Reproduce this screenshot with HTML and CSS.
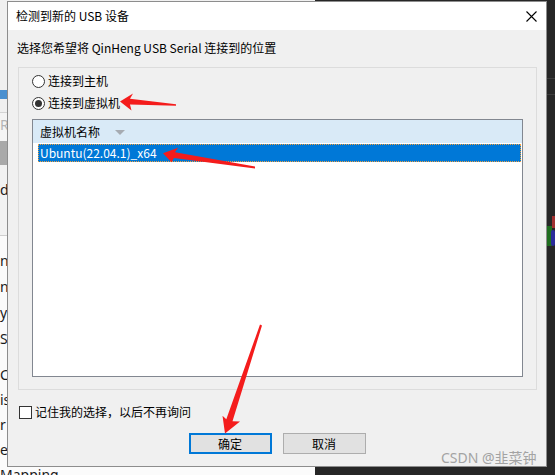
FILE: index.html
```html
<!DOCTYPE html>
<html lang="zh-CN">
<head>
<meta charset="utf-8">
<title>检测到新的 USB 设备</title>
<link rel="stylesheet" href="styles.css">
</head>
<body>
<div class="desktop">
  <div class="bgwin">
    <div class="seg seg-top"></div>
    <div class="seg seg-blue"></div>
    <div class="seg seg-gap"></div>
    <div class="seg seg-r">R</div>
    <div class="seg seg-gray"></div>
    <div class="seg seg-d">d</div>
    <div class="bg-list">
      <div class="bl">ng</div>
      <div class="bl">ng</div>
      <div class="bl">y</div>
      <div class="bl">Sc</div>
    </div>
    <div class="bg-list2">
      <div class="bl">C</div>
      <div class="bl">is</div>
      <div class="bl">r</div>
      <div class="bl">er</div>
      <div class="bl">Mapping</div>
    </div>
  </div>
  <div class="rstrip">
    <div class="rline"></div>
    <div class="rline r2"></div>
    <div class="rcolor"><span class="c-red"></span><span class="c-green"></span><span class="c-blue"></span></div>
  </div>

  <div class="dialog">
    <div class="titlebar">
      <span class="title">检测到新的 USB 设备</span>
      <svg class="close" width="11" height="11" viewBox="0 0 11 11"><path d="M0.5 0.5 L10.5 10.5 M10.5 0.5 L0.5 10.5" stroke="#000" stroke-width="1.1" fill="none"/></svg>
    </div>
    <div class="dbody">
      <div class="prompt">选择您希望将 QinHeng USB Serial 连接到的位置</div>
      <div class="group">
        <div class="radio"><span class="rb"></span><span>连接到主机</span></div>
        <div class="radio"><span class="rb checked"></span><span>连接到虚拟机</span></div>
        <div class="list">
          <div class="list-head"><span>虚拟机名称</span><span class="sort"></span></div>
          <div class="row sel">Ubuntu(22.04.1)_x64</div>
        </div>
      </div>
      <div class="remember"><span class="cb"></span><span>记住我的选择，以后不再询问</span></div>
      <div class="buttons">
        <button class="btn default">确定</button>
        <button class="btn">取消</button>
      </div>
    </div>
  </div>

  <svg class="arrows" width="555" height="475" viewBox="0 0 555 475">
    <polygon fill="#f41c1c" points="120,101.5 133,93.5 130,98.8 176,104.3 176,105.7 130,104.5 131.5,110.5"/>
    <polygon fill="#f41c1c" points="163,153.3 178,147.8 175,152.3 255,166.6 255,168.4 174,158 171.5,162.3"/>
    <polygon fill="#f41c1c" points="225,433.5 240,421.5 232.5,421.3 262,325.4 260,324.6 226.3,419.3 222.5,415.8"/>
  </svg>
  <div class="watermark">CSDN @韭菜钟</div>
</div>
</body>
</html>
```

FILE: styles.css
```css
* { box-sizing: border-box; }
html, body { margin: 0; padding: 0; }
body {
  background: #262626;
  font-family: "Noto Sans CJK SC", "Noto Sans", sans-serif;
  font-size: 12px;
  color: #000;
}
.desktop {
  position: relative;
  width: 555px;
  height: 475px;
  overflow: hidden;
  background: #262626;
}

/* background application on the left */
.bgwin {
  position: absolute;
  left: 0;
  top: 0;
  width: 315px;
  height: 475px;
  background: #f4f4f4;
  font-family: "Noto Sans", sans-serif;
  font-size: 14px;
  color: #1a1a1a;
  overflow: hidden;
}
.seg { width: 100%; }
.seg-top { height: 90px; background: #f0f0f0; }
.seg-blue { height: 9px; background: #4a90d0; }
.seg-gap { height: 14px; background: #f0f0f0; border-bottom: 1px solid #d4d4d4; }
.seg-r { height: 28px; line-height: 24px; color: #b4b4b4; padding-left: 0; }
.seg-gray { height: 24px; background: #a9a9a9; }
.seg-d { height: 71px; line-height: 50px; border-bottom: 1px solid #cfcfcf; background: #f2f2f2; }
.bg-list { padding-top: 12px; background: #fbfbfb; }
.bg-list .bl { height: 26px; line-height: 26px; }
.bg-list2 { padding-top: 10px; background: #fbfbfb; }
.bg-list2 .bl { height: 25px; line-height: 25px; }

.rstrip {
  position: absolute;
  right: 0;
  top: 0;
  width: 8px;
  height: 475px;
}
.rline { position: absolute; left: 0; top: 78px; width: 8px; height: 1px; background: #3c3c3c; }
.rline.r2 { top: 94px; }
.rcolor { position: absolute; left: 0; top: 216px; width: 8px; height: 34px; }
.rcolor span { position: absolute; display: block; }
.c-red { left: 5px; top: 0; width: 3px; height: 12px; background: #a03030; }
.c-green { left: 0; top: 10px; width: 5px; height: 20px; background: #1f6d1f; }
.c-blue { left: 4px; top: 14px; width: 4px; height: 16px; background: #2a2a9a; border-radius: 2px; }

/* dialog */
.dialog {
  position: absolute;
  left: 7px;
  top: 1px;
  width: 540px;
  height: 466px;
  border: 1px solid #8d8d8d;
  background: #f0f0f0;
  display: flex;
  flex-direction: column;
}
.titlebar {
  height: 28px;
  background: #fff;
  display: flex;
  align-items: center;
  justify-content: space-between;
  padding: 0 9px 1px 8px;
  flex: none;
}
.title { font-size: 12px; line-height: 16px; }
.close { display: block; margin-top: 1px; }

.dbody {
  flex: 1;
  display: flex;
  flex-direction: column;
}
.prompt {
  margin: 10px 0 0 9px;
  height: 16px;
  line-height: 16px;
}
.group {
  margin: 11px 9px 0 10px;
  border: 1px solid #dcdcdc;
  padding: 2px 13px 12px 13px;
}
.radio {
  height: 22px;
  display: flex;
  align-items: center;
  gap: 3px;
  line-height: 16px;
}
.rb {
  width: 13px;
  height: 13px;
  border: 1px solid #333;
  border-radius: 50%;
  background: #fff;
  display: flex;
  align-items: center;
  justify-content: center;
  flex: none;
}
.rb.checked::after {
  content: "";
  width: 7px;
  height: 7px;
  border-radius: 50%;
  background: #333;
}
.list {
  margin-top: 5px;
  height: 258px;
  border: 1px solid #828790;
  background: #fff;
}
.list-head {
  height: 23px;
  background: #d9eaf7;
  display: flex;
  align-items: center;
  padding-left: 7px;
  line-height: 16px;
}
.sort {
  margin-left: 15px;
  margin-top: 1px;
  width: 0;
  height: 0;
  border-left: 5px solid transparent;
  border-right: 5px solid transparent;
  border-top: 5px solid #a6abb2;
}
.row {
  margin: 1px 1px 0 5px;
  height: 18px;
  line-height: 15px;
  padding-left: 1px;
}
.row.sel {
  background: #0078d7;
  color: #fff;
  border: 1px dotted #f0a040;
}
.remember {
  margin: 14px 0 0 11px;
  height: 16px;
  display: flex;
  align-items: center;
  gap: 3px;
  line-height: 16px;
}
.cb {
  width: 13px;
  height: 13px;
  border: 1px solid #333;
  background: #fff;
  flex: none;
}
.buttons {
  margin-top: 13px;
  display: flex;
  justify-content: center;
  gap: 11px;
}
.btn {
  width: 83px;
  height: 21px;
  background: #e1e1e1;
  border: 1px solid #adadad;
  font-family: "Noto Sans CJK SC", sans-serif;
  font-size: 12px;
  line-height: 15px;
  color: #000;
  padding: 0;
  margin: 0;
}
.btn.default { border: 2px solid #0078d7; }

.arrows {
  position: absolute;
  left: 0;
  top: 0;
  pointer-events: none;
}
.watermark {
  position: absolute;
  left: 441px;
  top: 449px;
  font-family: "Noto Sans", "Noto Sans CJK SC", sans-serif;
  font-size: 14px;
  line-height: 18px;
  color: #a3a3a3;
  white-space: nowrap;
}
```
